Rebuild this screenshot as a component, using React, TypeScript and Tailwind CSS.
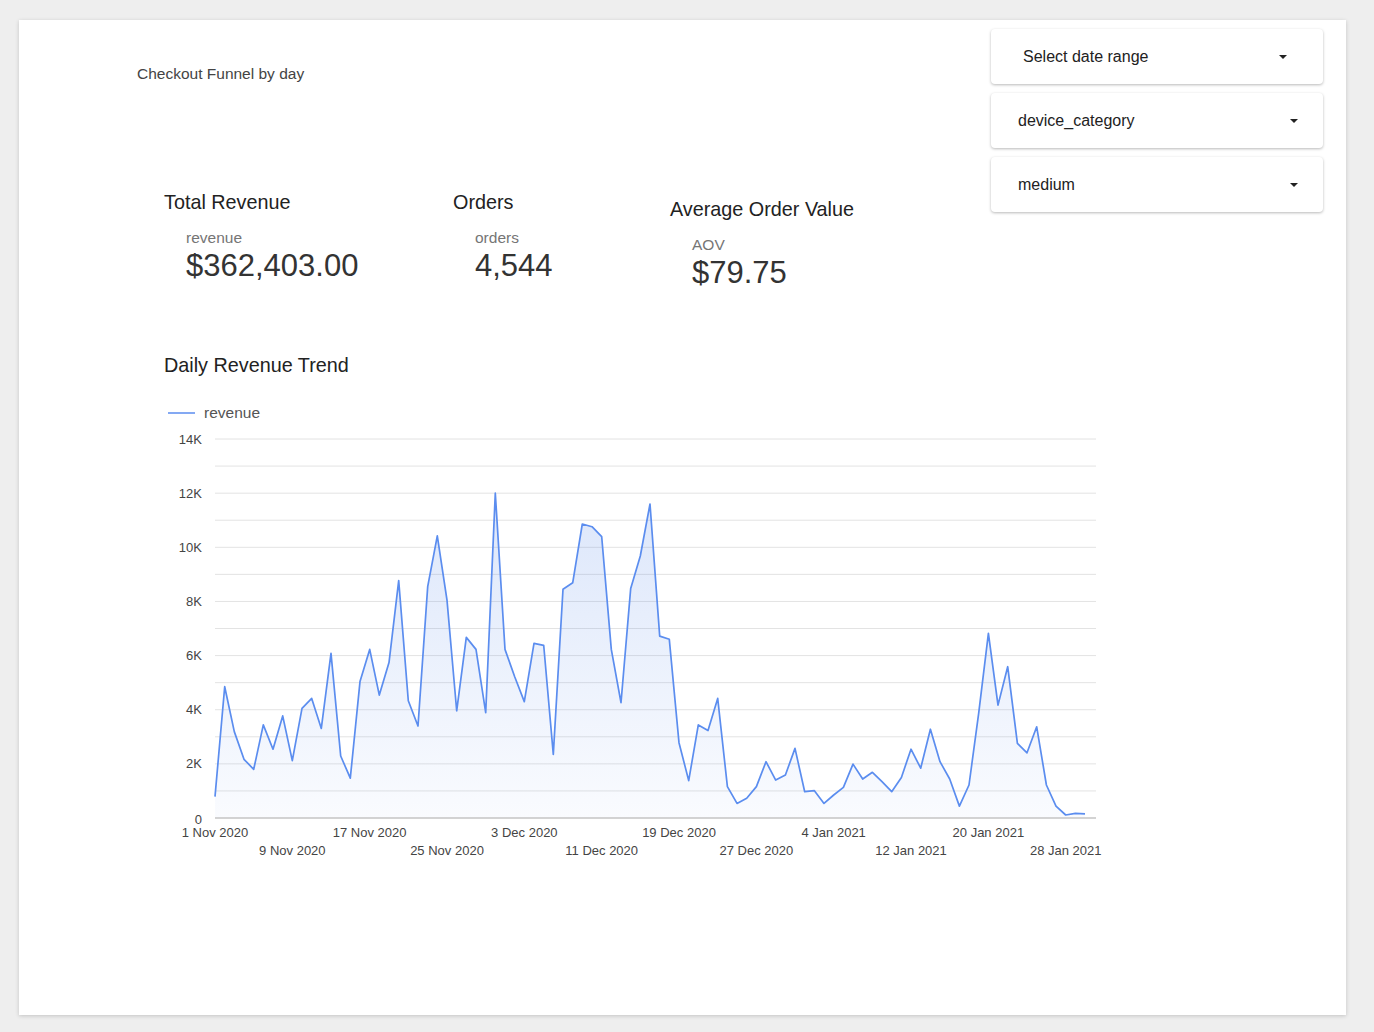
import React from "react";

const DATA = [
  0.79, 4.85, 3.19, 2.17, 1.8, 3.44, 2.54, 3.77, 2.12, 4.05, 4.42, 3.31, 6.08, 2.29, 1.47, 5.04, 6.23, 4.54, 5.74, 8.77,
  4.33, 3.4, 8.55, 10.42, 8.05, 3.96, 6.67, 6.23, 3.89, 12.0, 6.23, 5.22, 4.3, 6.45, 6.38, 2.35, 8.45, 8.69, 10.86, 10.76,
  10.39, 6.23, 4.26, 8.48, 9.68, 11.6, 6.72, 6.6, 2.78, 1.38, 3.44, 3.23, 4.42, 1.16, 0.54, 0.73, 1.16, 2.08, 1.4, 1.59,
  2.57, 0.97, 1.01, 0.54, 0.85, 1.13, 1.99, 1.44, 1.69, 1.34, 0.97, 1.5, 2.54, 1.84, 3.28, 2.08, 1.44, 0.44, 1.22, 3.87,
  6.82, 4.17, 5.59, 2.76, 2.41, 3.37, 1.22, 0.44, 0.11, 0.17, 0.15,
];

const X0 = 55;
const STEP = 9.667;
const Y0 = 418;
const PER_K = 27.07;
const px = (i: number) => X0 + i * STEP;
const py = (v: number) => Y0 - v * PER_K;

function Chart() {
  const pts = DATA.map((v, i) => `${px(i).toFixed(1)},${py(v).toFixed(1)}`);
  const line = "M" + pts.join(" L");
  const area = `${line} L${px(DATA.length - 1).toFixed(1)},${Y0} L${X0},${Y0} Z`;
  const grid = Array.from({ length: 14 }, (_, k) => Y0 - (k + 1) * PER_K);
  const yLabels = [0, 2, 4, 6, 8, 10, 12, 14];
  const row1 = [
    ["1 Nov 2020", 0],
    ["17 Nov 2020", 16],
    ["3 Dec 2020", 32],
    ["19 Dec 2020", 48],
    ["4 Jan 2021", 64],
    ["20 Jan 2021", 80],
  ] as const;
  const row2 = [
    ["9 Nov 2020", 8],
    ["25 Nov 2020", 24],
    ["11 Dec 2020", 40],
    ["27 Dec 2020", 56],
    ["12 Jan 2021", 72],
    ["28 Jan 2021", 88],
  ] as const;
  return (
    <svg width={950} height={460} className="block" style={{ fontFamily: '"Liberation Sans", Arial, sans-serif' }}>
      <defs>
        <linearGradient id="fillg" x1={0} y1={80} x2={0} y2={418} gradientUnits="userSpaceOnUse">
          <stop offset="0" stopColor="#4a7fe8" stopOpacity="0.2" />
          <stop offset="1" stopColor="#4a7fe8" stopOpacity="0.03" />
        </linearGradient>
      </defs>
      <line x1={8} y1={13} x2={35} y2={13} stroke="#5b8def" strokeWidth={1.5} />
      <text x={44} y={18} fontSize={15.5} fill="#555">
        revenue
      </text>
      {grid.map((y, i) => (
        <line key={i} x1={X0} y1={y} x2={936} y2={y} stroke="#e3e3e3" strokeWidth={1} />
      ))}
      <path d={area} fill="url(#fillg)" />
      <line x1={X0} y1={Y0} x2={936} y2={Y0} stroke="#c4c4c4" strokeWidth={1.5} />
      <path d={line} fill="none" stroke="#5b8def" strokeWidth={1.7} strokeLinejoin="round" />
      {yLabels.map((k) => (
        <text key={k} x={42} y={py(k) + 4.5 + (k === 0 ? 1 : 0)} fontSize={13} fill="#444" textAnchor="end">
          {k === 0 ? "0" : `${k}K`}
        </text>
      ))}
      {row1.map(([t, d]) => (
        <text key={t} x={px(d)} y={437} fontSize={13} fill="#444" textAnchor="middle">
          {t}
        </text>
      ))}
      {row2.map(([t, d]) => (
        <text key={t} x={px(d)} y={455} fontSize={13} fill="#444" textAnchor="middle">
          {t}
        </text>
      ))}
    </svg>
  );
}

function Arrow() {
  return (
    <svg width="8" height="4" viewBox="0 0 8 4" className="block">
      <path d="M0 0 L8 0 L4 4 Z" fill="#222" />
    </svg>
  );
}

function Dropdown({ label, pl, pr }: { label: string; pl: string; pr: string }) {
  return (
    <div
      className={`flex h-[55px] w-[332px] items-center justify-between rounded-[4px] bg-white shadow-[0_1px_3px_rgba(0,0,0,0.28)] ${pl} ${pr}`}
    >
      <span className="text-[16px] text-[#222]">{label}</span>
      <Arrow />
    </div>
  );
}

function Kpi({ title, label, value, offset }: { title: string; label: string; value: string; offset: string }) {
  return (
    <div className={offset}>
      <div className="text-[19.8px] leading-[22px] text-[#222]">{title}</div>
      <div className="ml-[22px] mt-[17px] text-[15.5px] leading-[16px] text-[#757575]">{label}</div>
      <div className="ml-[22px] mt-[2px] text-[31px] leading-[36px] text-[#333]">{value}</div>
    </div>
  );
}

export default function App() {
  return (
    <div
      className="min-h-screen bg-[#eeeeee] pl-[19px] pt-[20px]"
      style={{ fontFamily: '"Liberation Sans", Arial, sans-serif' }}
    >
      <div className="flex h-[995px] w-[1327px] flex-col bg-white shadow-[0_1px_4px_rgba(0,0,0,0.18)]">
        <div className="flex">
          <div className="w-[972px] shrink-0">
            <div className="ml-[118px] mt-[45px] text-[15.5px] leading-[18px] text-[#444]">Checkout Funnel by day</div>
            <div className="ml-[145px] mt-[108px] flex">
              <div className="w-[289px]">
                <Kpi title="Total Revenue" label="revenue" value="$362,403.00" offset="" />
              </div>
              <div className="w-[217px]">
                <Kpi title="Orders" label="orders" value="4,544" offset="" />
              </div>
              <div>
                <Kpi title="Average Order Value" label="AOV" value="$79.75" offset="mt-[7px]" />
              </div>
            </div>
          </div>
          <div className="flex flex-col gap-[9px] pt-[9px]">
            <Dropdown label="Select date range" pl="pl-[32px]" pr="pr-[36px]" />
            <Dropdown label="device_category" pl="pl-[27px]" pr="pr-[25px]" />
            <Dropdown label="medium" pl="pl-[27px]" pr="pr-[25px]" />
          </div>
        </div>
        <div className="ml-[145px] mt-[63px] text-[19.8px] leading-[22px] text-[#222]">Daily Revenue Trend</div>
        <div className="ml-[141px] mt-[24px]">
          <Chart />
        </div>
      </div>
    </div>
  );
}
